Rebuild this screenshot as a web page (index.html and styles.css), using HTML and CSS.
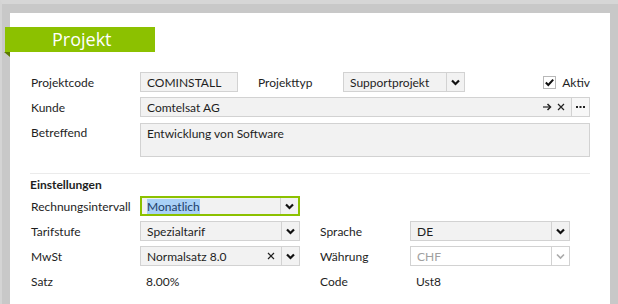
FILE: index.html
```
<!DOCTYPE html>
<html lang="de">
<head>
<meta charset="utf-8">
<link rel="stylesheet" href="styles.css">
</head>
<body>
<div class="frame">
  <div class="panel">
    <div class="banner"><span class="banner-title">Projekt</span><span class="fold"></span></div>
    <div class="form">
      <div class="row">
        <span class="label">Projektcode</span>
        <div class="field code"><span class="val">COMINSTALL</span></div>
        <span class="label typ">Projekttyp</span>
        <div class="field select typsel"><span class="val">Supportprojekt</span><span class="chev"><svg width="9" height="7" viewBox="0 0 9 7"><path d="M1 1.5 L4.5 5 L8 1.5" fill="none" stroke="#111" stroke-width="2.2"/></svg></span></div>
        <div class="spacer"></div>
        <span class="check"><svg width="13" height="13" viewBox="0 0 13 13"><rect x="0.5" y="0.5" width="12" height="12" fill="#fff" stroke="#b8b8b8"/><path d="M2.8 6.5 L5.3 9 L10.2 3.6" fill="none" stroke="#111" stroke-width="2"/></svg></span>
        <span class="aktiv">Aktiv</span>
      </div>
      <div class="row r2">
        <span class="label">Kunde</span>
        <div class="field wide"><span class="val">Comtelsat AG</span><span class="icons"><svg width="9" height="8" viewBox="0 0 9 8"><path d="M0 4 H7" stroke="#222" stroke-width="1.2"/><path d="M4.5 1 L7.5 4 L4.5 7" fill="none" stroke="#222" stroke-width="1.5"/></svg><svg width="8" height="8" viewBox="0 0 8 8"><path d="M1 1 L7 7 M7 1 L1 7" stroke="#222" stroke-width="1.2"/></svg></span><span class="dots"><svg width="9" height="3" viewBox="0 0 9 3"><rect x="0" y="0" width="2" height="2" fill="#222"/><rect x="3.5" y="0" width="2" height="2" fill="#222"/><rect x="7" y="0" width="2" height="2" fill="#222"/></svg></span></div>
      </div>
      <div class="row top">
        <span class="label">Betreffend</span>
        <div class="field wide area"><span class="val">Entwicklung von Software</span></div>
      </div>
      <div class="sep"></div>
      <div class="heading">Einstellungen</div>
      <div class="row">
        <span class="label">Rechnungsintervall</span>
        <div class="field select half focus"><span class="val"><span class="sel">Monatlich</span></span><span class="chev"><svg width="9" height="7" viewBox="0 0 9 7"><path d="M1 1.5 L4.5 5 L8 1.5" fill="none" stroke="#111" stroke-width="2.2"/></svg></span></div>
      </div>
      <div class="row">
        <span class="label">Tarifstufe</span>
        <div class="field select half"><span class="val">Spezialtarif</span><span class="chev"><svg width="9" height="7" viewBox="0 0 9 7"><path d="M1 1.5 L4.5 5 L8 1.5" fill="none" stroke="#111" stroke-width="2.2"/></svg></span></div>
        <span class="label2">Sprache</span>
        <div class="field select half"><span class="val">DE</span><span class="chev"><svg width="9" height="7" viewBox="0 0 9 7"><path d="M1 1.5 L4.5 5 L8 1.5" fill="none" stroke="#111" stroke-width="2.2"/></svg></span></div>
      </div>
      <div class="row">
        <span class="label">MwSt</span>
        <div class="field select half"><span class="val">Normalsatz 8.0</span><span class="xs"><svg width="8" height="8" viewBox="0 0 8 8"><path d="M1 1 L7 7 M7 1 L1 7" stroke="#222" stroke-width="1.2"/></svg></span><span class="chev"><svg width="9" height="7" viewBox="0 0 9 7"><path d="M1 1.5 L4.5 5 L8 1.5" fill="none" stroke="#111" stroke-width="2.2"/></svg></span></div>
        <span class="label2">Währung</span>
        <div class="field select half disabled"><span class="val">CHF</span><span class="chev"><svg width="9" height="7" viewBox="0 0 9 7"><path d="M1 1.5 L4.5 5 L8 1.5" fill="none" stroke="#aaa" stroke-width="1.6"/></svg></span></div>
      </div>
      <div class="row plain">
        <span class="label">Satz</span>
        <span class="text half">8.00%</span>
        <span class="label2">Code</span>
        <span class="text">Ust8</span>
      </div>
    </div>
  </div>
</div>
</body>
</html>
```
FILE: styles.css
```
* { box-sizing: border-box; }
html, body { margin: 0; padding: 0; }
body {
  width: 618px;
  height: 304px;
  overflow: hidden;
  background: #c8c8c8;
  font-family: "Lato", "Open Sans", sans-serif;
  font-size: 12px;
  color: #1e1e1e;
}
.frame {
  height: 304px;
  border-top: 4px solid #d6d6d6;
  border-left: 2px solid #d4d4d4;
  padding: 9px 8px 0 8px;
}
.panel {
  background: #fff;
  width: 600px;
  height: 291px;
  padding-top: 14px;
}
.banner {
  position: relative;
  margin-left: -5px;
  width: 150px;
  height: 25px;
  background: #8cc100;
  color: #fff;
  font-family: "Open Sans", sans-serif;
  font-size: 18px;
  line-height: 25px;
  padding-left: 47px;
}
.fold {
  position: absolute;
  left: -1px;
  top: 25px;
  width: 0;
  height: 0;
  border-top: 5px solid #5d7a00;
  border-left: 6px solid transparent;
}
.form {
  padding: 20px 20px 0 20px;
}
.row {
  display: flex;
  align-items: center;
  height: 20px;
  margin-bottom: 5px;
}
.row.r2 { margin-bottom: 6px; }
.row.top { align-items: flex-start; height: 34px; }
.row.top .label { padding-top: 2px; }
.label {
  width: 110px;
  padding-left: 1px;
  flex: none;
}
.label2 {
  width: 110px;
  padding-left: 20px;
  flex: none;
}
.field {
  height: 20px;
  background: #f2f2f2;
  border: 1px solid #d2d2d2;
  display: flex;
  align-items: center;
  flex: none;
}
.val {
  flex: 1;
  padding-left: 6px;
  white-space: nowrap;
  overflow: hidden;
}
.code { width: 98px; }
.typ { width: 105px; padding-left: 20px; }
.typsel { width: 122px; }
.spacer { flex: 1; }
.check { display: flex; margin-right: 6px; }
.wide { width: 450px; }
.area { height: 34px; align-items: flex-start; padding-top: 2px; }
.icons { display: flex; align-items: center; gap: 5px; padding-right: 6px; }
.dots {
  width: 18px;
  height: 18px;
  border-left: 1px solid #d2d2d2;
  background: #f7f7f7;
  display: flex;
  align-items: center;
  justify-content: center;
}
.xs { display: flex; padding-right: 6px; }
.select .chev {
  width: 18px;
  height: 18px;
  border-left: 1px solid #d2d2d2;
  display: flex;
  align-items: center;
  justify-content: center;
}
.half { width: 160px; }
.focus { border: 2px solid #8cc100; }
.focus .val { padding-left: 5px; }
.focus .chev { height: 16px; }
.sel { background: #a9d1f7; color: #1c3d6a; }
.disabled { background: #fff; color: #a0a0a0; }
.sep {
  height: 1px;
  background: #ebebeb;
  margin: 16px 0 3px 0;
}
.heading {
  font-weight: bold;
  height: 16px;
  line-height: 16px;
  margin-bottom: 3px;
}
.row.plain { height: 20px; }
.text { padding-left: 6px; }
.text.half { flex: none; }
```
